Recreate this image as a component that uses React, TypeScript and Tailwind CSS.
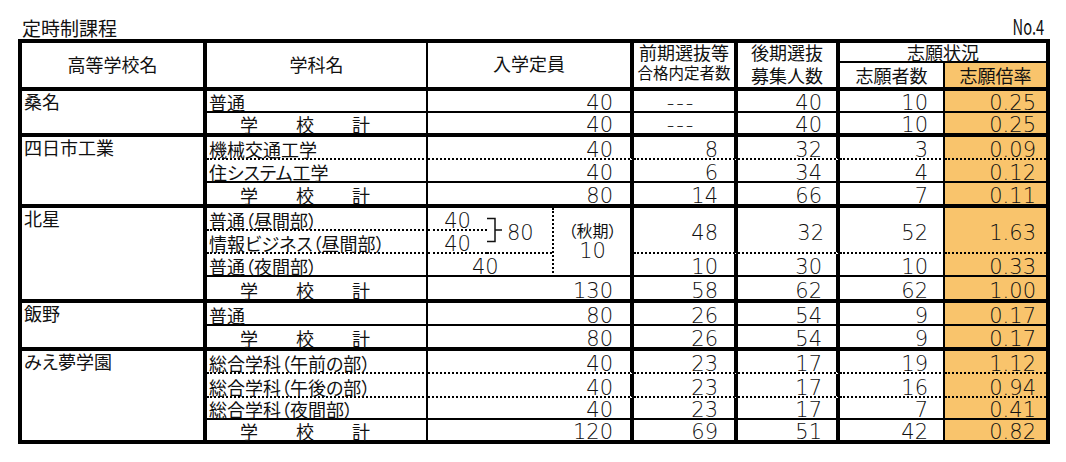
import React from "react";

// bottom line of a cell, by the kind of rule drawn under it
const LINE = {
  dot: "border-b-2 [border-bottom-style:dotted]",
  thin: "border-b-2",
  thick: "border-b-4",
  none: "",
} as const;
type Line = keyof typeof LINE;

const SPAN = {
  2: "row-span-2",
  3: "row-span-3",
  4: "row-span-4",
} as const;

type RowData = {
  dept: string;
  cap: string;
  zenki: string;
  kouki: string;
  shigan: string;
  rate: string;
  line: Line;
};

// the sheet's digits are wide and thin
const DIGITS = "font-['DejaVu_Sans',sans-serif] font-extralight text-[21px] leading-none";

function Num({ children }: { children: React.ReactNode }) {
  return <span className={`translate-y-[3px] ${DIGITS}`}>{children}</span>;
}

function School({ name, span, line }: { name: string; span: 2 | 3 | 4; line: Line }) {
  return (
    <div className={`flex items-start border-r-4 border-black pl-[2px] pt-[1px] ${SPAN[span]} ${LINE[line]}`}>
      <span className="leading-none">{name}</span>
    </div>
  );
}

function Dept({ name, line }: { name: string; line: Line }) {
  return (
    <div className={`flex items-end overflow-visible border-r-2 border-black pl-[2px] ${LINE[line]}`}>
      {name === "学校計" ? (
        <span className="flex gap-[38px] pl-[31px] leading-none">
          <span>学</span>
          <span>校</span>
          <span>計</span>
        </span>
      ) : (
        <span className="whitespace-nowrap leading-none">{name}</span>
      )}
    </div>
  );
}

function Row({ r }: { r: RowData }) {
  const b = LINE[r.line];
  return (
    <>
      <Dept name={r.dept} line={r.line} />
      <div className={`col-span-3 flex items-end justify-end border-r-4 border-black pr-[17px] ${b}`}>
        <Num>{r.cap}</Num>
      </div>
      {r.zenki === "---" ? (
        <div className={`flex items-end justify-center border-r-4 border-black pr-[6px] ${b}`}>
          <Num>
            <span className="tracking-[2px]">---</span>
          </Num>
        </div>
      ) : (
        <div className={`flex items-end justify-end border-r-4 border-black pr-[16px] ${b}`}>
          <Num>{r.zenki}</Num>
        </div>
      )}
      <div className={`flex items-end justify-end border-r-4 border-black pr-[14px] ${b}`}>
        <Num>{r.kouki}</Num>
      </div>
      <div className={`flex items-end justify-end border-r-2 border-black pr-[15px] ${b}`}>
        <Num>{r.shigan}</Num>
      </div>
      <div className={`flex items-end justify-end border-black bg-[#f9c46c] pr-[10px] ${b}`}>
        <Num>{r.rate}</Num>
      </div>
    </>
  );
}

const kuwana: RowData[] = [
  { dept: "普通", cap: "40", zenki: "---", kouki: "40", shigan: "10", rate: "0.25", line: "thin" },
  { dept: "学校計", cap: "40", zenki: "---", kouki: "40", shigan: "10", rate: "0.25", line: "thick" },
];

const yokkaichi: RowData[] = [
  { dept: "機械交通工学", cap: "40", zenki: "8", kouki: "32", shigan: "3", rate: "0.09", line: "dot" },
  { dept: "住システム工学", cap: "40", zenki: "6", kouki: "34", shigan: "4", rate: "0.12", line: "thin" },
  { dept: "学校計", cap: "80", zenki: "14", kouki: "66", shigan: "7", rate: "0.11", line: "thick" },
];

const iino: RowData[] = [
  { dept: "普通", cap: "80", zenki: "26", kouki: "54", shigan: "9", rate: "0.17", line: "thin" },
  { dept: "学校計", cap: "80", zenki: "26", kouki: "54", shigan: "9", rate: "0.17", line: "thick" },
];

const mie: RowData[] = [
  { dept: "総合学科（午前の部）", cap: "40", zenki: "23", kouki: "17", shigan: "19", rate: "1.12", line: "dot" },
  { dept: "総合学科（午後の部）", cap: "40", zenki: "23", kouki: "17", shigan: "16", rate: "0.94", line: "dot" },
  { dept: "総合学科（夜間部）", cap: "40", zenki: "23", kouki: "17", shigan: "7", rate: "0.41", line: "thin" },
  { dept: "学校計", cap: "120", zenki: "69", kouki: "51", shigan: "42", rate: "0.82", line: "none" },
];

function Bracket() {
  return (
    <svg width="16" height="26" viewBox="0 0 16 26" className="shrink-0">
      <path d="M0 1.5H8V24.5H0M8 13H15" fill="none" stroke="#111" strokeWidth="1.5" />
    </svg>
  );
}

export default function App() {
  return (
    <div className="h-[462px] w-[1066px] bg-white pl-[18px] font-['Noto_Sans_CJK_JP',sans-serif] text-[18px] text-[#111] [font-feature-settings:'palt']">
      <div className="flex h-[39px] w-[1032px] items-end justify-between pb-[2px] pl-[4px] pr-[6px]">
        <span className="text-[19px] leading-none">定時制課程</span>
        <span className="origin-right scale-x-[0.7] text-[21px] leading-none">No.4</span>
      </div>

      <div className="grid w-[1032px] grid-cols-[185px_221px_59px_65px_82px_104px_102px_105px_101px] grid-rows-[20px_28px_22px_24px_23px_23px_25px_23px_23px_23px_26px_23px_25px_23px_24px_22px_20px] border-4 border-black">
        {/* header */}
        <div className="row-span-2 flex items-center justify-center border-r-4 border-b-4 border-black pb-[3px] leading-none">
          高等学校名
        </div>
        <div className="row-span-2 flex items-center justify-center border-r-2 border-b-4 border-black pb-[3px] leading-none">
          学科名
        </div>
        <div className="col-span-3 row-span-2 flex items-center justify-center border-r-4 border-b-4 border-black pb-[5px] leading-none">
          入学定員
        </div>
        <div className="row-span-2 flex flex-col items-center border-r-4 border-b-4 border-black leading-none">
          <span>前期選抜等</span>
          <span className="mt-[4px] text-[15.5px]">合格内定者数</span>
        </div>
        <div className="row-span-2 flex flex-col items-center border-r-4 border-b-4 border-black leading-none">
          <span>後期選抜</span>
          <span className="mt-[5px]">募集人数</span>
        </div>
        <div className="col-span-2 flex items-start justify-center border-b-2 border-black leading-none">
          志願状況
        </div>
        <div className="flex items-end justify-center border-r-2 border-b-4 border-black pb-[3px] leading-none">
          志願者数
        </div>
        <div className="flex items-end justify-center border-b-4 border-black bg-[#f9c46c] pb-[3px] leading-none">
          志願倍率
        </div>

        {/* 桑名 */}
        <School name="桑名" span={2} line="thick" />
        {kuwana.map((r, i) => (
          <Row key={i} r={r} />
        ))}

        {/* 四日市工業 */}
        <School name="四日市工業" span={3} line="thick" />
        {yokkaichi.map((r, i) => (
          <Row key={i} r={r} />
        ))}

        {/* 北星 */}
        <School name="北星" span={4} line="thick" />
        <Dept name="普通（昼間部）" line="dot" />
        <div className={`flex items-end justify-center border-black ${LINE.dot}`}>
          <Num>40</Num>
        </div>
        <div className={`row-span-2 flex items-center gap-[4px] border-black ${LINE.dot}`}>
          <Bracket />
          <Num>80</Num>
        </div>
        <div className="row-span-3 flex flex-col items-center justify-center border-l-2 border-r-4 border-b-2 border-black pl-[1px] leading-none [border-left-style:dotted]">
          <span className="text-[16px]">（秋期）</span>
          <span className={`mt-[3px] ${DIGITS}`}>10</span>
        </div>
        <div className={`row-span-2 flex items-center justify-end border-r-4 border-black pr-[16px] ${LINE.dot}`}>
          <Num>48</Num>
        </div>
        <div className={`row-span-2 flex items-center justify-end border-r-4 border-black pr-[12px] ${LINE.dot}`}>
          <Num>32</Num>
        </div>
        <div className={`row-span-2 flex items-center justify-end border-r-2 border-black pr-[15px] ${LINE.dot}`}>
          <Num>52</Num>
        </div>
        <div className={`row-span-2 flex items-center justify-end border-black bg-[#f9c46c] pr-[10px] ${LINE.dot}`}>
          <Num>1.63</Num>
        </div>

        <Dept name="情報ビジネス（昼間部）" line="dot" />
        <div className={`flex items-end justify-center border-black ${LINE.dot}`}>
          <Num>40</Num>
        </div>

        <Dept name="普通（夜間部）" line="thin" />
        <div className={`col-span-2 flex items-end border-black pl-[44px] ${LINE.thin}`}>
          <Num>40</Num>
        </div>
        <div className={`flex items-end justify-end border-r-4 border-black pr-[16px] ${LINE.thin}`}>
          <Num>10</Num>
        </div>
        <div className={`flex items-end justify-end border-r-4 border-black pr-[14px] ${LINE.thin}`}>
          <Num>30</Num>
        </div>
        <div className={`flex items-end justify-end border-r-2 border-black pr-[15px] ${LINE.thin}`}>
          <Num>10</Num>
        </div>
        <div className={`flex items-end justify-end border-black bg-[#f9c46c] pr-[10px] ${LINE.thin}`}>
          <Num>0.33</Num>
        </div>

        <Row r={{ dept: "学校計", cap: "130", zenki: "58", kouki: "62", shigan: "62", rate: "1.00", line: "thick" }} />

        {/* 飯野 */}
        <School name="飯野" span={2} line="thick" />
        {iino.map((r, i) => (
          <Row key={i} r={r} />
        ))}

        {/* みえ夢学園 */}
        <School name="みえ夢学園" span={4} line="none" />
        {mie.map((r, i) => (
          <Row key={i} r={r} />
        ))}
      </div>
    </div>
  );
}
